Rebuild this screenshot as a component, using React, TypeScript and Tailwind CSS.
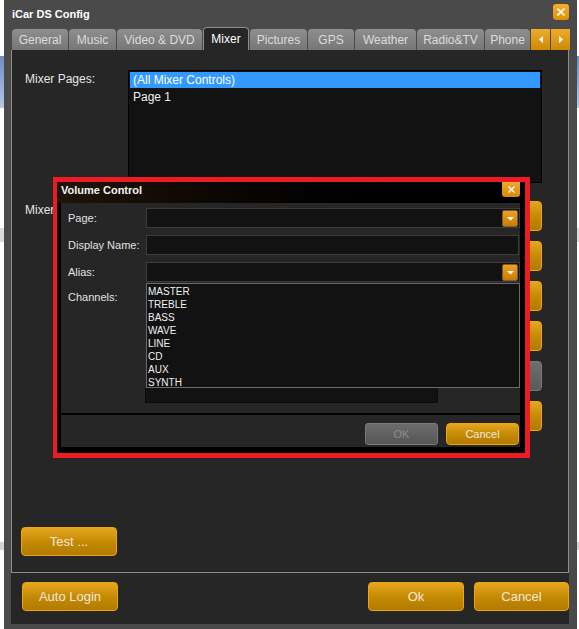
import React from "react";

const orangeBtn =
  "flex items-center justify-center rounded-[4px] border border-[#f0a40e] bg-linear-to-b from-[#e6a61f] via-[#c58b03] to-[#b27a00] text-[#f2e8dc]";

const tabs = [
  { label: "General", w: "w-[56px]" },
  { label: "Music", w: "w-[47px]" },
  { label: "Video & DVD", w: "w-[85px]" },
  { label: "Mixer", w: "w-[46px]", active: true },
  { label: "Pictures", w: "w-[57px]" },
  { label: "GPS", w: "w-[46px]" },
  { label: "Weather", w: "w-[61px]" },
  { label: "Radio&TV", w: "w-[67px]" },
  { label: "Phone", w: "w-[45px]" },
];

const channels = ["MASTER", "TREBLE", "BASS", "WAVE", "LINE", "CD", "AUX", "SYNTH"];

function CloseX({ size = 8 }: { size?: number }) {
  return (
    <svg width={size} height={size} viewBox="0 0 8 8">
      <path d="M1 1L7 7M7 1L1 7" stroke="#fff" strokeWidth="1.6" strokeLinecap="square" />
    </svg>
  );
}

function DropArrow() {
  return (
    <div className="flex h-[17px] w-[16px] items-center justify-center rounded-[2px] border border-[#7a5a30] bg-linear-to-b from-[#f0a020] to-[#c87c00]">
      <svg width="7" height="5" viewBox="0 0 7 5">
        <path d="M0 1H7L3.5 4.5Z" fill="#fff" />
      </svg>
    </div>
  );
}

// bits of the page behind the window
function BgStrip({ width }: { width: string }) {
  return (
    <div className={`flex ${width} flex-col bg-white`}>
      <div className="h-[56px]" />
      <div className="h-[52px] bg-linear-to-b from-[#6d8cc4] to-[#b9c8e4]" />
      <div className="h-[120px]" />
      <div className="h-[14px] bg-[#dcdcdc]" />
      <div className="h-[300px]" />
      <div className="h-[8px] bg-[#d4d4d4]" />
    </div>
  );
}

export default function App() {
  return (
    <div className="relative flex h-[629px] w-[579px] overflow-hidden bg-white font-['Liberation_Sans',Arial,sans-serif]">
      <BgStrip width="w-[4px]" />

      {/* main window */}
      <div className="flex w-[573px] flex-col bg-[#4a4a4a]">
        {/* title bar */}
        <div className="flex h-[28px] items-start">
          <span className="pl-[8px] pt-[7px] text-[11px] leading-[14px] font-bold text-white">
            iCar DS Config
          </span>
          <div className="mt-[4px] mr-[8px] ml-auto flex h-[16px] w-[16px] items-center justify-center rounded-[3px] bg-linear-to-b from-[#f6b02c] to-[#e08f00]">
            <CloseX />
          </div>
        </div>

        {/* tabs */}
        <div className="ml-[8px] flex h-[22px] items-end gap-[1px]">
          {tabs.map((t) =>
            t.active ? (
              <div
                key={t.label}
                className={`${t.w} flex h-[23px] items-center justify-center rounded-t-[4px] border border-b-0 border-[#8c8c8c] bg-[#262626] text-[12px] text-white`}
              >
                {t.label}
              </div>
            ) : (
              <div
                key={t.label}
                className={`${t.w} flex h-[21px] items-center justify-center rounded-t-[4px] bg-linear-to-b from-[#8e8e8e] to-[#777777] pt-[1px] text-[12px] text-[#dcdcdc]`}
              >
                {t.label}
              </div>
            )
          )}
          <div className="flex h-[21px] w-[19px] items-center justify-center bg-linear-to-b from-[#eeac2a] to-[#d08800]">
            <svg width="4" height="7" viewBox="0 0 4 7">
              <path d="M4 0V7L0 3.5Z" fill="#fff" />
            </svg>
          </div>
          <div className="flex h-[21px] w-[19px] items-center justify-center bg-linear-to-b from-[#eeac2a] to-[#d08800]">
            <svg width="4" height="7" viewBox="0 0 4 7">
              <path d="M0 0V7L4 3.5Z" fill="#fff" />
            </svg>
          </div>
        </div>

        {/* content panel */}
        <div className="ml-[7px] flex h-[523px] w-[558px] flex-col border-x border-b border-[#8c8c8c] bg-[#262626]">
          <div className="mt-[20px] flex">
            <span className="w-[116px] pt-[1px] pl-[13px] text-[12px] leading-[16px] text-[#e6e6e6]">
              Mixer Pages:
            </span>
            <div className="h-[113px] w-[414px] border border-black bg-[#121212] p-[1px] text-[12px] leading-[16px]">
              <div className="h-[16px] bg-[#3399ff] pl-[3px] text-white">(All Mixer Controls)</div>
              <div className="mt-[1px] pl-[3px] text-[#f0f0f0]">Page 1</div>
            </div>
          </div>

          <div className="mt-[18px] flex">
            {/* the dialog covers the rest of this label */}
            <span className="w-[41px] overflow-hidden whitespace-nowrap pt-[1px] pl-[13px] text-[12px] leading-[16px] text-[#e6e6e6]">
              Mixer
            </span>
            <div className="mr-[26px] ml-auto flex flex-col gap-[10px]">
              {[0, 1, 2, 3].map((i) => (
                <div key={i} className={`${orangeBtn} h-[30px] w-[96px]`} />
              ))}
              <div className="h-[30px] w-[96px] rounded-[4px] border border-[#7a7a7a] bg-linear-to-b from-[#6e6e6e] to-[#5a5a5a]" />
              <div className={`${orangeBtn} h-[30px] w-[96px]`} />
            </div>
          </div>

          <div className="mt-auto mb-[16px] ml-[9px]">
            <div className={`${orangeBtn} h-[29px] w-[96px] text-[13px]`}>Test ...</div>
          </div>
        </div>

        {/* bottom buttons */}
        <div className="ml-[7px] flex h-[51px] w-[558px] items-start bg-[#262626] pt-[9px] pl-[11px]">
          <div className={`${orangeBtn} h-[29px] w-[96px] text-[13px]`}>Auto Login</div>
          <div className={`${orangeBtn} ml-auto h-[29px] w-[96px] text-[13px]`}>Ok</div>
          <div className={`${orangeBtn} ml-[10px] h-[29px] w-[95px] text-[13px]`}>Cancel</div>
        </div>
      </div>

      <BgStrip width="w-[2px]" />

      {/* Volume Control dialog, highlighted in red */}
      <div className="absolute top-[177px] left-[53px] h-[281px] w-[477px] border-[5px] border-l-4 border-[#ed1c24] bg-black">
        <div className="flex h-[21px] items-start bg-linear-to-r from-[#1e1508] to-black">
          <span className="pt-[1px] pl-[4px] text-[11px] leading-[14px] font-bold text-[#f4f4f4]">
            Volume Control
          </span>
          <div className="mr-[5px] ml-auto flex h-[15px] w-[18px] items-center justify-center rounded-b-[3px] bg-linear-to-b from-[#f0a82a] to-[#d88a00]">
            <CloseX size={7} />
          </div>
        </div>

        {/* client */}
        <div className="mr-[5px] ml-[4px] flex h-[210px] flex-col bg-[#262626] pt-[5px] text-[11px] text-[#e2e2e2]">
          <div className="flex h-[20px] items-center">
            <span className="w-[85px] pl-[7px]">Page:</span>
            <div className="flex h-[20px] flex-1 items-center justify-end border border-[#3c3c3c] bg-[#121212] pr-[1px]">
              <DropArrow />
            </div>
          </div>
          <div className="mt-[7px] flex h-[20px] items-center">
            <span className="w-[85px] pl-[7px]">Display Name:</span>
            <div className="mr-[1px] h-[20px] flex-1 border border-[#3c3c3c] bg-[#121212]" />
          </div>
          <div className="mt-[7px] flex h-[20px] items-center">
            <span className="w-[85px] pl-[7px]">Alias:</span>
            <div className="flex h-[20px] flex-1 items-center justify-end border border-[#3c3c3c] bg-[#121212] pr-[1px]">
              <DropArrow />
            </div>
          </div>
          <div className="mt-[1px] flex">
            <span className="w-[85px] pt-[6px] pl-[7px]">Channels:</span>
            <div className="flex flex-1 flex-col">
              <div className="h-[105px] border border-[#6a6a6a] bg-[#121212] pt-[1px] pl-[1px] text-[10px] leading-[13px] text-[#f0f0f0]">
                {channels.map((c) => (
                  <div key={c}>{c}</div>
                ))}
              </div>
              <div className="ml-[-1px] h-[15px] w-[293px] border border-[#0a0a0a] border-t-0 bg-[#121212]" />
            </div>
          </div>
        </div>

        <div className="mr-[5px] ml-[4px] mt-[2px] flex h-[32px] justify-end gap-[8px] bg-[#262626] pt-[8px] pr-[1px]">
          <div className="flex h-[22px] w-[73px] items-center justify-center rounded-[3px] border border-[#7a7a7a] bg-linear-to-b from-[#6c6c6c] to-[#565656] text-[11px] text-[#8e8e8e]">
            OK
          </div>
          <div className={`${orangeBtn} h-[22px] w-[73px] rounded-[3px] text-[11px]`}>Cancel</div>
        </div>
      </div>
    </div>
  );
}
